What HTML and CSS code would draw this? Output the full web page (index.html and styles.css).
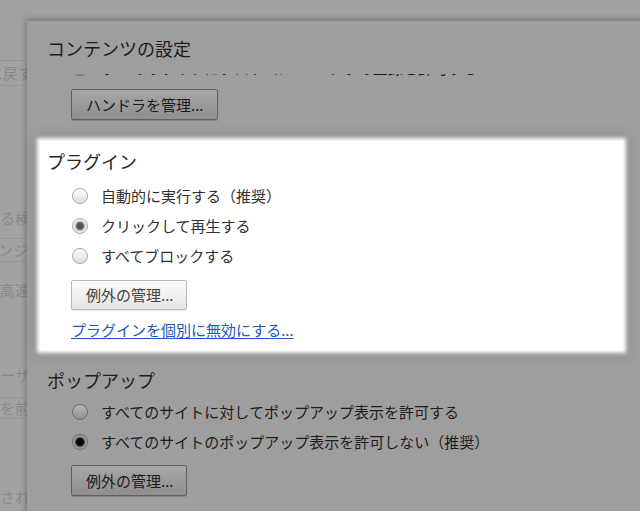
FILE: index.html
```html
<!DOCTYPE html>
<html lang="ja">
<head>
<meta charset="utf-8">
<title>コンテンツの設定</title>
<link rel="stylesheet" href="styles.css">
</head>
<body>
<div class="bgpage">
  <div class="bgbox bg-reset"><span class="shift-reset">既定に戻す</span></div>
  <div class="bgline bg-search"><span class="shift-search">使用される検索エンジン</span></div>
  <div class="bgbox bg-engine"><span class="shift-engine">検索エンジンの管理</span></div>
  <div class="bgline bg-fast"><span class="shift-fast">ページの高速化</span></div>
  <div class="bgline bg-user"><span class="shift-user">ユーザー</span></div>
  <div class="bgbox bg-name"><span class="shift-name">ページを前に表示</span></div>
  <div class="bgline bg-done"><span class="shift-done">保存されたパスワード</span></div>
</div>

<div class="dialog">
  <h1 class="title">コンテンツの設定</h1>
  <div class="clip">
    <div class="row clipped-row"><span class="radio dim"></span><span class="label">すべてのサイトにプロトコル ハンドラの登録を許可する</span></div>
  </div>
  <button class="btn dim-btn btn-handler">ハンドラを管理...</button>

  <section class="hl">
    <h2 class="heading">プラグイン</h2>
    <div class="rows">
      <div class="row"><span class="radio"></span><span class="label">自動的に実行する（推奨）</span></div>
      <div class="row"><span class="radio checked"></span><span class="label">クリックして再生する</span></div>
      <div class="row"><span class="radio"></span><span class="label">すべてブロックする</span></div>
    </div>
    <button class="btn light-btn btn-exc">例外の管理...</button>
    <div class="linkline"><a class="link" href="#">プラグインを個別に無効にする...</a></div>
  </section>

  <section class="popup">
    <h2 class="heading">ポップアップ</h2>
    <div class="rows">
      <div class="row"><span class="radio dim"></span><span class="label">すべてのサイトに対してポップアップ表示を許可する</span></div>
      <div class="row"><span class="radio dim checked"></span><span class="label">すべてのサイトのポップアップ表示を許可しない（推奨）</span></div>
    </div>
    <button class="btn dim-btn btn-exc2">例外の管理...</button>
  </section>
</div>
</body>
</html>
```

FILE: styles.css
```css
* {
  box-sizing: border-box;
  margin: 0;
  padding: 0;
}

html, body {
  width: 640px;
  height: 511px;
  overflow: hidden;
}

body {
  position: relative;
  background: #a2a2a2;
  font-family: "Noto Sans CJK JP", "Noto Sans", sans-serif;
  font-size: 15px;
}

/* ---------- dimmed settings page behind ---------- */
.bgpage {
  color: #898989;
  white-space: nowrap;
  overflow: hidden;
  width: 60px;
}

.bgline {
  height: 24px;
  line-height: 24px;
}

.bgbox {
  border-top: 1px solid #959595;
  border-bottom: 1px solid #959595;
  line-height: 22px;
}

.bg-reset { margin-top: 60px; height: 26px; line-height: 24px; }
.bg-search { margin-top: 120px; }
.bg-engine { margin-top: 8px; height: 24px; }
.bg-fast { margin-top: 16px; }
.bg-user { margin-top: 61px; }
.bg-name { margin-top: 10px; height: 22px; line-height: 20px; }
.bg-done { margin-top: 66px; }

.shift-reset { margin-left: -42px; }
.shift-search { margin-left: -60px; }
.shift-engine { margin-left: -47px; }
.shift-fast { margin-left: -60px; }
.shift-user { margin-left: -15px; }
.shift-name { margin-left: -45px; }
.shift-done { margin-left: -30px; }

/* ---------- dialog ---------- */
.dialog {
  position: absolute;
  left: 27px;
  top: 20px;
  width: 660px;
  height: 540px;
  background: #9e9e9e;
  border-top: 1px solid #878787;
  box-shadow: -1px -1px 6px rgba(0, 0, 0, 0.28);
  padding: 15px 0 0 20px;
  color: #1d1d1d;
}

.title {
  font-size: 18px;
  font-weight: normal;
  line-height: 24px;
  height: 24px;
}

.clip {
  margin-top: 14px;
  height: 3px;
  overflow: hidden;
}

.clipped-row {
  margin-top: -21px;
}

.rows {
  display: flex;
  flex-direction: column;
}

.row {
  display: flex;
  align-items: center;
  height: 30px;
  padding-left: 25px;
  gap: 13px;
  white-space: nowrap;
}

.label {
  line-height: 20px;
}

/* radios */
.radio {
  flex: none;
  width: 16px;
  height: 16px;
  border-radius: 50%;
  border: 1px solid #a8a8a8;
  background: linear-gradient(#fdfdfd, #dedede);
  box-shadow: inset 0 1px 1px rgba(255, 255, 255, 0.8);
}

.radio.checked {
  background: radial-gradient(circle at 50% 50%, #4f4f4f 0, #555 3px, #9a9a9a 4px, #e2e2e2 5.5px, #f4f4f4 7px);
}

.radio.dim {
  border-color: #6d6d6d;
  background: linear-gradient(#b3b3b3, #929292);
  box-shadow: none;
}

.radio.dim.checked {
  background: radial-gradient(circle at 50% 50%, #050505 0, #0a0a0a 3.5px, #5a5a5a 4.5px, #9c9c9c 6px, #a8a8a8 7px);
}

/* buttons */
.btn {
  display: block;
  margin-left: 24px;
  padding: 0 14px;
  border-radius: 2px;
  font-family: "Noto Sans CJK JP", "Noto Sans", sans-serif;
  font-size: 15px;
  line-height: 20px;
  white-space: nowrap;
}

.dim-btn {
  border: 1px solid #616161;
  background: linear-gradient(#a6a6a6, #8f8f8f);
  color: #1a1a1a;
  box-shadow: 0 1px 1px rgba(0, 0, 0, 0.15);
}

.light-btn {
  border: 1px solid #b6b6b6;
  background: linear-gradient(#fbfbfb, #e4e4e4);
  color: #444;
  box-shadow: 0 1px 1px rgba(0, 0, 0, 0.08);
}

.btn-handler {
  margin-top: 12px;
  height: 31px;
  width: 147px;
}

.btn-exc {
  margin-top: 9px;
  height: 30px;
  width: 116px;
}

.btn-exc2 {
  margin-top: 8px;
  height: 31px;
  width: 116px;
}

/* highlighted plugin section */
.hl {
  margin-top: 21px;
  margin-left: -7px;
  width: 583px;
  padding: 8px 0 10px 7px;
  background: #fff;
  color: #303030;
  box-shadow: 0 0 4px 3px #fff, 0 0 12px 6px rgba(0, 0, 0, 0.12);
}

.heading {
  font-size: 18px;
  font-weight: normal;
  line-height: 24px;
  height: 24px;
}

.hl .heading {
  margin-bottom: 8px;
  color: #262626;
}

.linkline {
  margin-top: 10px;
  margin-left: 24px;
  line-height: 20px;
  height: 20px;
}

.link {
  color: #2158c6;
  text-decoration: underline;
  text-underline-offset: 2px;
}

/* popup section */
.popup {
  margin-top: 18px;
}

.popup .heading {
  margin-bottom: 5px;
}
```
